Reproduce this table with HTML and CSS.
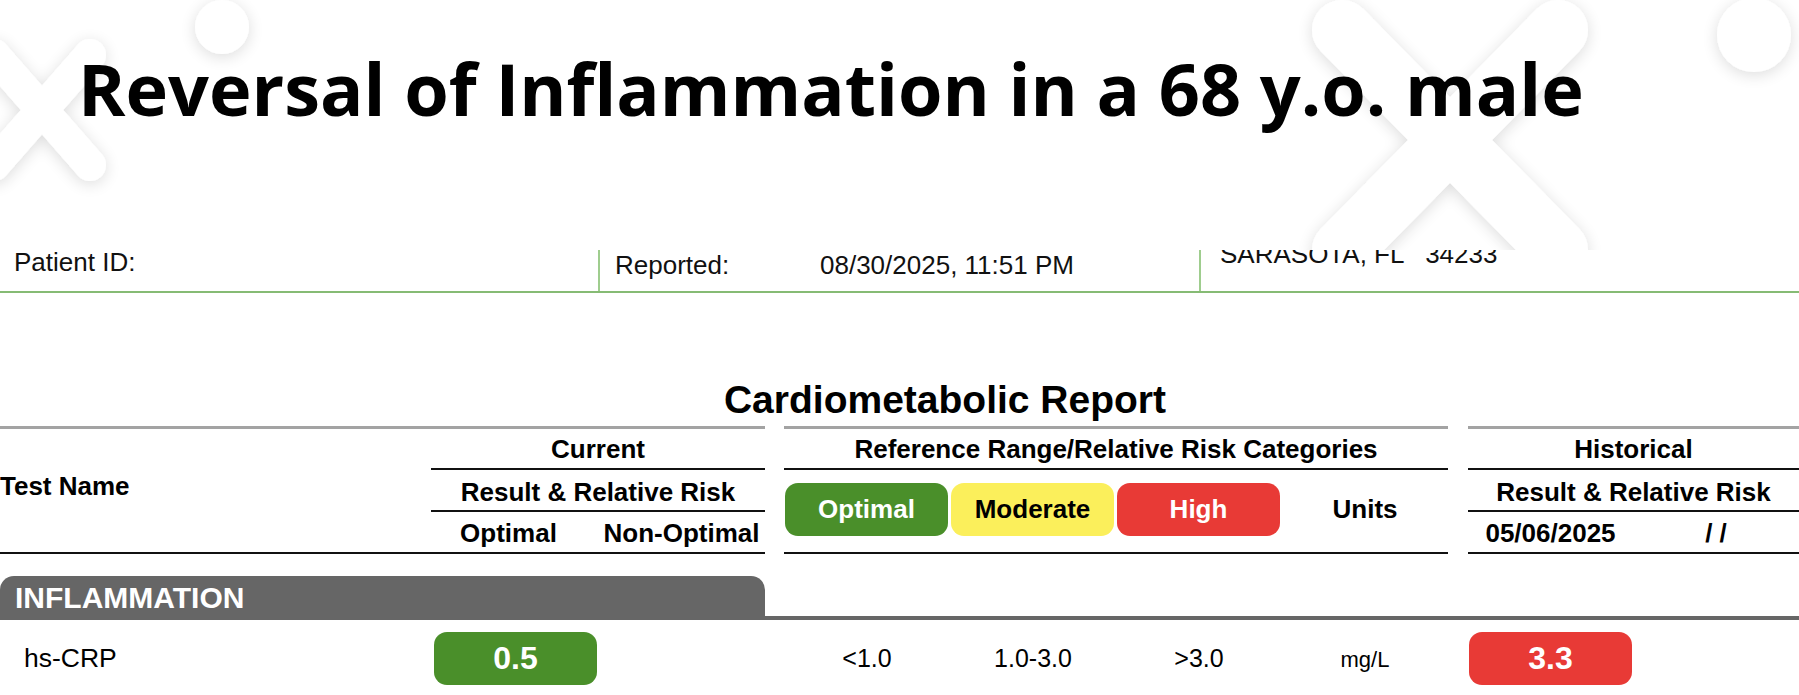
FILE: index.html
```html
<!DOCTYPE html>
<html lang="en">
<head>
<meta charset="utf-8">
<title>Reversal of Inflammation</title>
<link rel="stylesheet" href="styles.css">
</head>
<body>
<header class="hero">
  <svg class="deco" width="1799" height="250" viewBox="0 0 1799 250" aria-hidden="true">
    <defs>
      <filter id="sh" x="-40%" y="-40%" width="180%" height="180%">
        <feGaussianBlur in="SourceAlpha" stdDeviation="8" result="blur"/>
        <feOffset in="blur" dy="3" result="off"/>
        <feComponentTransfer in="off" result="soft"><feFuncA type="linear" slope="0.14"/></feComponentTransfer>
        <feMerge><feMergeNode in="soft"/><feMergeNode in="SourceGraphic"/></feMerge>
      </filter>
    </defs>
    <g filter="url(#sh)" stroke="#fff" stroke-linecap="round" fill="none">
      <path d="M-6 55 L90 165 M-6 165 L90 55" stroke-width="32"/>
    </g>
    <g filter="url(#sh)" stroke="#fff" stroke-linecap="round" fill="none">
      <path d="M1342 30 L1558 250 M1342 250 L1558 30" stroke-width="60"/>
    </g>
    <g filter="url(#sh)" fill="#fff">
      <circle cx="222" cy="27" r="27"/>
      <circle cx="1754" cy="35" r="37"/>
    </g>
  </svg>
  <h1 class="title">Reversal of Inflammation in a 68 y.o. male</h1>
</header>

<section class="report">
  <div class="pt-row">
    <div class="pt-cell"><span class="pt-text pt-id">Patient ID:</span></div>
    <div class="pt-cell pt-sep"><span class="pt-text pt-rep"><span class="pt-label">Reported:</span>08/30/2025, 11:51 PM</span></div>
    <div class="pt-cell pt-sep pt-clip"><span class="pt-text pt-addr">SARASOTA, FL   34233</span></div>
  </div>

  <h2 class="rpt-title">Cardiometabolic Report</h2>

  <div class="thead">
    <div class="th top bot test-name">Test Name</div>
    <div class="th top bot cur-grp">Current</div>
    <div class="th top bot ref-grp">Reference Range/Relative Risk Categories</div>
    <div class="th top bot his-grp">Historical</div>

    <div class="th bot cur-sub">Result &amp; Relative Risk</div>
    <div class="th bot cat-cell b-opt"><div class="pill pill-green">Optimal</div></div>
    <div class="th bot cat-cell b-mod"><div class="pill pill-yellow">Moderate</div></div>
    <div class="th bot cat-cell b-high"><div class="pill pill-red">High</div></div>
    <div class="th bot units">Units</div>
    <div class="th bot his-sub">Result &amp; Relative Risk</div>

    <div class="th bot r3 cur-opt">Optimal</div>
    <div class="th bot r3 cur-non">Non-Optimal</div>
    <div class="th bot r3 his-d1">05/06/2025</div>
    <div class="th bot r3 his-d2">/ /</div>
  </div>

  <div class="cat">
    <div class="cat-bar">INFLAMMATION</div>
    <div class="cat-line"></div>
  </div>

  <div class="drow">
    <div class="d-name">hs-CRP</div>
    <div class="d-val"><div class="pill pill-green pill-num">0.5</div></div>
    <div class="d-ref d-opt">&lt;1.0</div>
    <div class="d-ref d-mod">1.0-3.0</div>
    <div class="d-ref d-high">&gt;3.0</div>
    <div class="d-unit">mg/L</div>
    <div class="d-hist"><div class="pill pill-red pill-num">3.3</div></div>
  </div>
</section>
</body>
</html>
```

FILE: styles.css
```css
* {
  box-sizing: border-box;
}

html,
body {
  margin: 0;
  padding: 0;
}

body {
  width: 1799px;
  height: 695px;
  overflow: hidden;
  background: #fff;
  color: #000;
  font-family: "Liberation Sans", Arial, sans-serif;
  --cols: 431px 167px 167px 19px 166px 166px 166px 166px 20px 165px 166px;
}

/* ---------- hero ---------- */
.hero {
  position: relative;
  height: 250px;
  overflow: hidden;
}

.deco {
  position: absolute;
  left: 0;
  top: 0;
}

.title {
  position: relative;
  margin: 0;
  padding: 52px 0 0 78px;
  font-family: "Open Sans", "Liberation Sans", sans-serif;
  font-weight: 700;
  font-size: 72px;
  line-height: 72px;
  white-space: nowrap;
  color: #000;
}

/* ---------- patient row ---------- */
.report {
  background: #fff;
}

.pt-row {
  display: grid;
  grid-template-columns: 598px 601px 600px;
  height: 43px;
  border-bottom: 2px solid #86bb74;
  font-size: 26px;
  line-height: 24px;
  color: #111;
}

.pt-sep {
  border-left: 2px solid #9fcd8e;
}

.pt-clip {
  overflow: hidden;
}

.pt-text {
  display: block;
  white-space: pre;
}

.pt-id {
  padding-left: 14px;
}

.pt-rep {
  padding: 3px 0 0 15px;
}

.pt-label {
  display: inline-block;
  width: 205px;
}

.pt-addr {
  margin-top: -8px;
  padding-left: 19px;
}

/* ---------- report title ---------- */
.rpt-title {
  margin: 85px 0 4px;
  padding-left: 91px;
  text-align: center;
  font-weight: 700;
  font-size: 39px;
  line-height: 44px;
}

/* ---------- table head ---------- */
.thead {
  display: grid;
  grid-template-columns: var(--cols);
  grid-template-rows: 44px 42px 42px;
  font-weight: 700;
  font-size: 26px;
  line-height: 30px;
}

.th {
  text-align: center;
  white-space: nowrap;
}

.top {
  border-top: 3px solid #a3a3a3;
}

.bot {
  border-bottom: 2px solid #111;
}

.test-name {
  grid-column: 1;
  grid-row: 1 / 4;
  text-align: left;
  padding-top: 42px;
}

.cur-grp {
  grid-column: 2 / 4;
  grid-row: 1;
  padding-top: 5px;
}

.ref-grp {
  grid-column: 5 / 9;
  grid-row: 1;
  padding-top: 5px;
}

.his-grp {
  grid-column: 10 / 12;
  grid-row: 1;
  padding-top: 5px;
}

.cur-sub {
  grid-column: 2 / 4;
  grid-row: 2;
  padding-top: 7px;
}

.his-sub {
  grid-column: 10 / 12;
  grid-row: 2;
  padding-top: 7px;
}

.r3 {
  grid-row: 3;
  padding-top: 6px;
}

.cur-opt {
  grid-column: 2;
  padding-right: 12px;
}

.cur-non {
  grid-column: 3;
}

.his-d1 {
  grid-column: 10;
}

.his-d2 {
  grid-column: 11;
}

.cat-cell {
  grid-row: 2 / 4;
  padding: 13px 2px 0 1px;
}

.b-opt {
  grid-column: 5;
}

.b-mod {
  grid-column: 6;
}

.b-high {
  grid-column: 7;
}

.units {
  grid-column: 8;
  grid-row: 2 / 4;
  padding-top: 24px;
}

/* ---------- pills ---------- */
.pill {
  height: 53px;
  border-radius: 13px;
  line-height: 53px;
  text-align: center;
  font-weight: 700;
  font-size: 26px;
}

.pill-green {
  background: #4a8f2a;
  color: #fff;
}

.pill-yellow {
  background: #fbef5b;
  color: #000;
}

.pill-red {
  background: #e83a36;
  color: #fff;
}

.pill-num {
  font-size: 32px;
}

/* ---------- category ---------- */
.cat {
  margin-top: 22px;
}

.cat-bar {
  width: 765px;
  height: 40px;
  padding: 2px 0 0 15px;
  background: #666;
  border-radius: 14px 14px 0 0;
  color: #fff;
  font-weight: 700;
  font-size: 30px;
  line-height: 40px;
}

.cat-line {
  height: 4px;
  background: #666;
}

/* ---------- data row ---------- */
.drow {
  display: grid;
  grid-template-columns: var(--cols);
  height: 75px;
  font-size: 25px;
  line-height: 30px;
}

.d-name {
  grid-column: 1;
  padding: 23px 0 0 24px;
  font-size: 26.5px;
}

.d-val {
  grid-column: 2;
  padding: 12px 1px 0 3px;
}

.d-ref {
  text-align: center;
  padding-top: 23px;
}

.d-opt {
  grid-column: 5;
}

.d-mod {
  grid-column: 6;
}

.d-high {
  grid-column: 7;
}

.d-unit {
  grid-column: 8;
  text-align: center;
  font-size: 22px;
  padding-top: 25px;
}

.d-hist {
  grid-column: 10;
  padding: 12px 1px 0 1px;
}
```
